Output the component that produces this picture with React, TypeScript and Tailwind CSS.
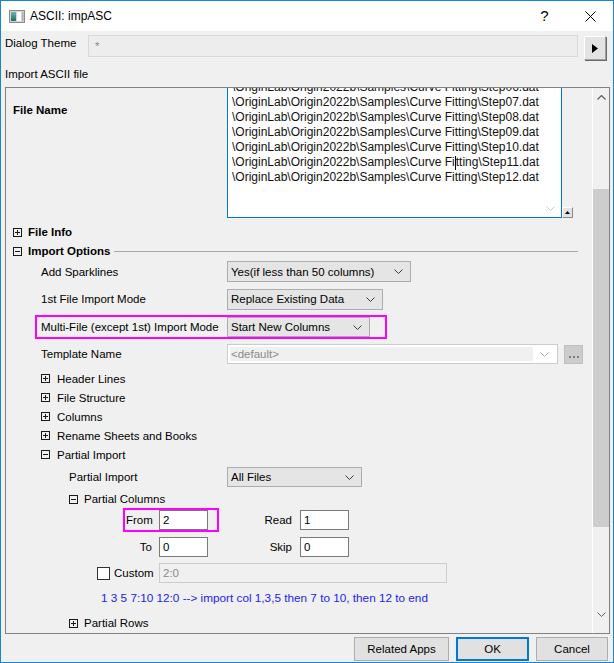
import type { ReactNode } from "react";

const files = ["06", "07", "08", "09", "10", "11", "12"];

function Chevron({ color = "#3c3c3c" }: { color?: string }) {
  return (
    <svg width="9" height="5" viewBox="0 0 9 5" fill="none" stroke={color} strokeWidth="1">
      <polyline points="0.5,0.5 4.5,4.5 8.5,0.5" />
    </svg>
  );
}

function TreeBox({ open }: { open?: boolean }) {
  return (
    <svg width="9" height="9" viewBox="0 0 9 9" className="shrink-0">
      <rect x="0.5" y="0.5" width="8" height="8" fill="none" stroke="#1a1a1a" />
      <line x1="2" y1="4.5" x2="7" y2="4.5" stroke="#1a1a1a" />
      {!open && <line x1="4.5" y1="2" x2="4.5" y2="7" stroke="#1a1a1a" />}
    </svg>
  );
}

function Combo({ value, className }: { value: string; className: string }) {
  return (
    <div className={`flex items-center justify-between border border-[#adadad] bg-[#e5e5e5] pl-[3px] pr-[7px] ${className}`}>
      <span>{value}</span>
      <Chevron />
    </div>
  );
}

function Field({ value }: { value: string }) {
  return (
    <div className="flex h-[20px] w-[49px] items-center border border-[#7a7a7a] bg-white pl-[3px]">{value}</div>
  );
}

function Node({ label, open, indent }: { label: string; open?: boolean; indent: string }) {
  return (
    <div className={`flex h-[19px] shrink-0 items-center gap-[7px] ${indent}`}>
      <TreeBox open={open} />
      <span>{label}</span>
    </div>
  );
}

function Row({ h, children }: { h: string; children: ReactNode }) {
  return <div className={`flex shrink-0 items-center ${h}`}>{children}</div>;
}

function AppIcon() {
  return (
    <svg width="16" height="13" viewBox="0 0 16 13">
      <rect x="0.5" y="0.5" width="15" height="12" fill="#d4d4d4" stroke="#8a8a8a" />
      <defs>
        <linearGradient id="g" x1="0" y1="0" x2="0" y2="1">
          <stop offset="0" stopColor="#6fb3a4" />
          <stop offset="1" stopColor="#1f6e6a" />
        </linearGradient>
      </defs>
      <rect x="2" y="2" width="5" height="9" fill="url(#g)" />
      <rect x="8" y="2" width="4" height="9" fill="#ffffff" />
      <rect x="13" y="2" width="1.5" height="9" fill="#b0b0b0" />
    </svg>
  );
}

export default function App() {
  return (
    <div className="flex h-[663px] w-[614px] flex-col overflow-hidden border border-[#1883d7] bg-[#f0f0f0] font-['Liberation_Sans',Arial,sans-serif] text-[11.5px] leading-[16px] text-black">
      {/* Title bar */}
      <div className="flex h-[30px] shrink-0 items-center bg-white">
        <div className="ml-[8px] flex">
          <AppIcon />
        </div>
        <span className="ml-[5px] text-[12px]">ASCII: impASC</span>
        <span className="ml-auto w-[45px] text-center text-[15px]">?</span>
        <div className="flex w-[46px] items-center justify-center">
          <svg width="11" height="11" viewBox="0 0 11 11" stroke="#000" strokeWidth="1">
            <line x1="0.5" y1="0.5" x2="10.5" y2="10.5" />
            <line x1="10.5" y1="0.5" x2="0.5" y2="10.5" />
          </svg>
        </div>
      </div>

      {/* Dialog theme */}
      <div className="mt-[4px] flex h-[25px] shrink-0 items-start pl-[4px]">
        <span className="w-[83px]">Dialog Theme</span>
        <div className="flex h-[22px] w-[490px] items-center border border-[#d9d9d9] bg-[#ededed] pl-[6px] text-[#8a8a8a]">*</div>
        <div className="ml-[6px] mt-[1px] flex h-[24px] w-[22px] items-center justify-center border border-[#a0a0a0] border-t-white border-l-white bg-[#e3e3e3] shadow-[1px_1px_0_#696969]">
          <svg width="6" height="9" viewBox="0 0 6 9">
            <polygon points="0,0 6,4.5 0,9" fill="#000" />
          </svg>
        </div>
      </div>

      <div className="flex h-[27px] shrink-0 items-center pl-[4px]">Import ASCII file</div>

      {/* Tree panel */}
      <div className="ml-[4px] flex h-[547px] w-[605px] shrink-0 border border-[#828282]">
        <div className="flex w-[586px] flex-col overflow-hidden">
          {/* File name */}
          <div className="flex h-[134px] shrink-0 items-start">
            <span className="mt-[14px] w-[221px] pl-[7px] font-bold">File Name</span>
            <div className="relative h-[130px] w-[335px] overflow-hidden border-x border-b border-[#0078d7] bg-white">
              <div className="-mt-[8px] pl-[4px] text-[12px] leading-[15px] whitespace-nowrap text-[#111]">
                {files.map((n) => (
                  <div key={n}>
                    {n === "11" ? (
                      <>
                        \OriginLab\Origin2022b\Samples\Curve Fi
                        <span className="inline-block h-[14px] w-0 border-l border-black align-middle" />
                        tting\Step{n}.dat
                      </>
                    ) : (
                      <>\OriginLab\Origin2022b\Samples\Curve Fitting\Step{n}.dat</>
                    )}
                  </div>
                ))}
              </div>
              <div className="absolute bottom-[6px] right-[6px]">
                <Chevron color="#c8c8c8" />
              </div>
            </div>
            <div className="mt-[119px] flex h-[11px] w-[11px] items-center justify-center border border-[#8a8a8a] border-t-white border-l-white bg-[#e3e3e3]">
              <svg width="5" height="3" viewBox="0 0 5 3">
                <polygon points="0,3 2.5,0 5,3" fill="#000" />
              </svg>
            </div>
          </div>

          <Row h="h-[20px]">
            <div className="flex items-center gap-[6px] pl-[7px] font-bold">
              <TreeBox />
              File Info
            </div>
          </Row>

          <Row h="h-[18px]">
            <div className="flex items-center gap-[6px] pl-[7px] font-bold">
              <TreeBox open />
              Import Options
            </div>
            <div className="ml-[4px] mr-[14px] h-px flex-1 bg-[#a8a8a8]" />
          </Row>

          <Row h="h-[23px]">
            <span className="w-[221px] pl-[35px]">Add Sparklines</span>
            <Combo value="Yes(if less than 50 columns)" className="h-[21px] w-[184px]" />
          </Row>

          <Row h="h-[32px]">
            <span className="w-[221px] pl-[35px]">1st File Import Mode</span>
            <Combo value="Replace Existing Data" className="h-[21px] w-[156px]" />
          </Row>

          <Row h="h-[24px]">
            <div className="ml-[29px] flex h-[24px] w-[352px] items-center border-2 border-[#ff00ff]">
              <span className="w-[190px] pl-[4px]">Multi-File (except 1st) Import Mode</span>
              <Combo value="Start New Columns" className="h-[20px] w-[143px]" />
            </div>
          </Row>

          <Row h="h-[30px]">
            <span className="w-[221px] pl-[35px]">Template Name</span>
            <div className="flex h-[20px] w-[331px] items-center border border-[#cccccc] bg-white p-[2px]">
              <div className="flex h-full flex-1 items-center bg-[#f0f0f0] pl-[1px] text-[#8a8a8a]">&lt;default&gt;</div>
              <div className="flex w-[22px] justify-center">
                <Chevron color="#a8a8a8" />
              </div>
            </div>
            <div className="ml-[6px] flex h-[19px] w-[19px] items-end justify-center gap-[2px] border border-[#bfbfbf] bg-[#cccccc] pb-[5px]">
              <span className="h-[2px] w-[2px] bg-[#808080]" />
              <span className="h-[2px] w-[2px] bg-[#808080]" />
              <span className="h-[2px] w-[2px] bg-[#808080]" />
            </div>
          </Row>

          <Node label="Header Lines" indent="pl-[35px]" />
          <Node label="File Structure" indent="pl-[35px]" />
          <Node label="Columns" indent="pl-[35px]" />
          <Node label="Rename Sheets and Books" indent="pl-[35px]" />
          <Node label="Partial Import" open indent="pl-[35px]" />

          <Row h="h-[26px]">
            <span className="w-[221px] pl-[63px]">Partial Import</span>
            <Combo value="All Files" className="h-[20px] w-[135px]" />
          </Row>

          <Row h="h-[18px]">
            <div className="flex items-center gap-[6px] pl-[63px]">
              <TreeBox open />
              Partial Columns
            </div>
          </Row>

          <Row h="h-[24px]">
            <div className="ml-[117px] flex h-[24px] w-[96px] items-center border-2 border-[#ff00ff]">
              <span className="w-[34px] pl-[1px]">From</span>
              <Field value="2" />
            </div>
            <span className="w-[73px] text-right">Read</span>
            <div className="ml-[8px]">
              <Field value="1" />
            </div>
          </Row>

          <Row h="h-[30px]">
            <span className="w-[146px] text-right">To</span>
            <div className="ml-[7px]">
              <Field value="0" />
            </div>
            <span className="w-[84px] text-right">Skip</span>
            <div className="ml-[8px]">
              <Field value="0" />
            </div>
          </Row>

          <Row h="h-[22px]">
            <div className="ml-[91px] h-[13px] w-[13px] border border-[#333333] bg-white" />
            <span className="w-[49px] pl-[4px]">Custom</span>
            <div className="flex h-[20px] w-[288px] items-center border border-[#cccccc] bg-[#f0f0f0] pl-[3px] text-[#8a8a8a]">2:0</div>
          </Row>

          <Row h="h-[28px]">
            <span className="pl-[95px] text-[11.75px] text-[#2323f0]">1 3 5 7:10 12:0 --&gt; import col 1,3,5 then 7 to 10, then 12 to end</span>
          </Row>

          <Row h="h-[22px]">
            <div className="flex items-center gap-[6px] pl-[63px]">
              <TreeBox />
              Partial Rows
            </div>
          </Row>
        </div>

        {/* Scrollbar */}
        <div className="flex w-[17px] flex-col border-l border-white bg-[#f0f0f0]">
          <div className="flex h-[17px] items-center justify-center pt-[2px]">
            <svg width="9" height="5" viewBox="0 0 9 5" fill="none" stroke="#606060" strokeWidth="1.2">
              <polyline points="0.5,4.5 4.5,0.5 8.5,4.5" />
            </svg>
          </div>
          <div className="h-[84px]" />
          <div className="h-[338px] bg-[#cdcdcd]" />
          <div className="flex-1" />
          <div className="flex h-[26px] justify-center pt-[5px]">
            <Chevron color="#606060" />
          </div>
        </div>
      </div>

      {/* Buttons */}
      <div className="mt-[3px] flex h-[24px] shrink-0 justify-end gap-[7px] pr-[5px]">
        <button className="w-[95px] border border-[#adadad] bg-[#e1e1e1]">Related Apps</button>
        <button className="w-[73px] border-2 border-[#0078d7] bg-[#e1e1e1]">OK</button>
        <button className="w-[72px] border border-[#adadad] bg-[#e1e1e1]">Cancel</button>
      </div>
    </div>
  );
}
